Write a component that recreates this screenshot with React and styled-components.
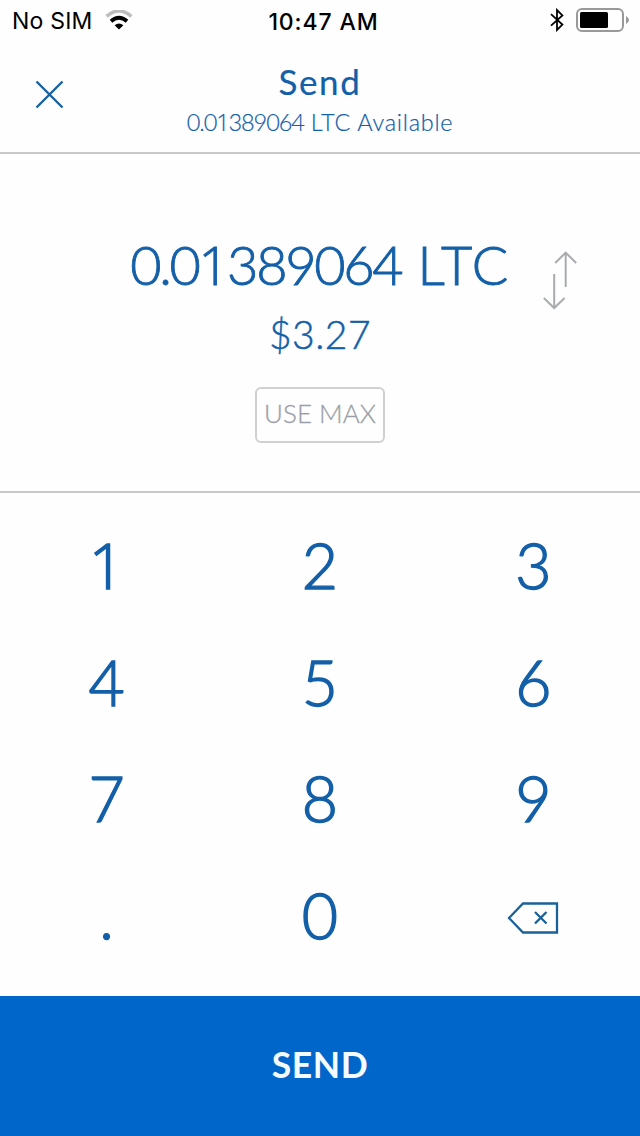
import React from 'react';
import styled, { createGlobalStyle } from 'styled-components';

const GlobalStyle = createGlobalStyle`
  * { box-sizing: border-box; }
  body { margin: 0; background: #fefefe; }
  button { border: 0; padding: 0; margin: 0; background: none; font: inherit; color: inherit; cursor: pointer; }
  svg { display: block; }
`;

const Screen = styled.main`
  display: flex;
  flex-direction: column;
  width: 640px;
  height: 1136px;
  overflow: hidden;
  background: #fefefe;
  color: #135fa8;
  font-family: Lato, "Open Sans", sans-serif;
`;

const StatusBar = styled.div`
  display: grid;
  grid-template-columns: 1fr auto 1fr;
  align-items: center;
  height: 40px;
  padding: 0 11px 0 12px;
  color: #000;
  font-family: Inter, sans-serif;
  font-size: 23px;
  line-height: 40px;

  svg { margin-bottom: 2px; }
`;

const Carrier = styled.div`
  display: flex;
  align-items: center;
  gap: 12px;
  letter-spacing: 0.2px;
`;

const Clock = styled.div`
  padding: 2px 0 0 6px;
  font-weight: 500;
  letter-spacing: 0.9px;
`;

const Indicators = styled.div`
  display: flex;
  align-items: center;
  justify-content: flex-end;
  gap: 12px;
`;

const Header = styled.header`
  display: grid;
  grid-template-columns: 100px 1fr 100px;
  height: 114px;
  border-bottom: 2px solid #c8c8c8;
`;

const CloseButton = styled.button`
  display: flex;
  align-items: flex-start;
  padding: 40px 0 0 35px;
`;

const Heading = styled.div`
  display: flex;
  flex-direction: column;
  align-items: center;
  padding-top: 19px;
`;

const Title = styled.h1`
  margin: 0;
  font-size: 35px;
  font-weight: 400;
  line-height: 44px;
  letter-spacing: 1.6px;
  -webkit-text-stroke: 0.2px;
`;

const Spaced = styled.span`
  letter-spacing: ${(p) => p.$gap}px;
`;

const Available = styled.div`
  margin-top: 1px;
  font-size: 23.5px;
  font-weight: 300;
  line-height: 36px;
  white-space: nowrap;
  -webkit-text-stroke: 0.2px;
`;

const AmountPanel = styled.section`
  display: grid;
  grid-template-columns: 120px 1fr 120px;
  height: 339px;
  border-bottom: 2px solid #c8c8c8;
`;

const Amounts = styled.div`
  grid-column: 2;
  display: flex;
  flex-direction: column;
  align-items: center;
  padding-top: 75px;
`;

const CryptoAmount = styled.div`
  font-size: 54px;
  font-weight: 300;
  line-height: 72px;
  white-space: nowrap;
  -webkit-text-stroke: 0.9px;
`;

const FiatAmount = styled.div`
  padding-top: 3px;
  font-size: 39px;
  font-weight: 300;
  line-height: 60px;
  letter-spacing: 0.5px;
  -webkit-text-stroke: 0.5px;
`;

const MaxButton = styled.button`
  width: 130px;
  height: 56px;
  margin-top: 23px;
  border: 2px solid #d0d0d0;
  border-radius: 6px;
  color: #9b9ea6;
  font-size: 26px;
  font-weight: 300;
  line-height: 48px;
  padding-bottom: 4px;
  white-space: nowrap;
  -webkit-text-stroke: 0.3px;
`;

const SwapButton = styled.button`
  display: flex;
  align-items: flex-start;
  padding: 96px 0 0 22px;
`;

const Keypad = styled.section`
  display: grid;
  grid-template-columns: repeat(3, 1fr);
  grid-auto-rows: 116.5px;
  flex: 1;
  padding-top: 14px;
`;

const Key = styled.button`
  display: flex;
  align-items: center;
  justify-content: center;
  font-size: 62.5px;
  font-weight: 300;
  line-height: 1;
  -webkit-text-stroke: 1.4px;
`;

const DeleteKey = styled(Key)`
  padding-top: 7px;
`;

const PlainOne = styled.span`
  font-family: "Open Sans", sans-serif;
  line-height: 1;
`;

const SendButton = styled.button`
  height: 140px;
  padding-bottom: 2px;
  background: #0066c9;
  color: #f4fcff;
  font-size: 35.5px;
  font-weight: 700;
  line-height: 134px;
  letter-spacing: 0.6px;
`;

const WifiIcon = () => (
  <svg width="28" height="20" viewBox="0 0 28 20" fill="none">
    <path d="M1.6 6.3Q14-4.3 26.4 6.3" stroke="#bdbdbd" strokeWidth="3.6" />
    <path d="M6 11.2Q14 4.4 22 11.2" stroke="#000" strokeWidth="3.8" />
    <path d="M9.6 15.2Q14 11.6 18.4 15.2L14 19.6Z" fill="#000" />
  </svg>
);

const BluetoothIcon = () => (
  <svg width="14" height="24" viewBox="0 0 14 24" fill="none" stroke="#000" strokeWidth="1.8">
    <path d="M1 6.2 12.4 16.6 7 22V2L12.4 7.4 1 17.6" />
  </svg>
);

const BatteryIcon = () => (
  <svg width="53" height="24" viewBox="0 0 53 24">
    <rect x="1" y="1" width="46" height="22" rx="5" fill="none" stroke="#999" strokeWidth="2" />
    <rect x="4" y="4" width="28" height="16" rx="1.5" fill="#000" />
    <path d="M50 8Q53 10 53 12T50 16Z" fill="#999" />
  </svg>
);

const CloseIcon = () => (
  <svg width="29" height="29" viewBox="0 0 29 29" stroke="#17629f" strokeWidth="2.4">
    <path d="M1.5 1.5 27.5 27.5M27.5 1.5 1.5 27.5" />
  </svg>
);

const SwapIcon = () => (
  <svg width="36" height="60" viewBox="0 0 36 60" fill="none" stroke="#a9abae" strokeWidth="2">
    <path d="M23.7 37V3M13.2 13 23.7 2.6 34.2 13M12.2 24V57M1.8 48 12.2 58 22.6 48" />
  </svg>
);

const BackspaceIcon = () => (
  <svg width="52" height="32" viewBox="0 0 52 32" fill="none" stroke="#1a6198" strokeWidth="2.3">
    <path d="M16 1.5H50V30.5H16L2 16ZM28 10 39.5 21.5M39.5 10 28 21.5" />
  </svg>
);

// Sets the digit 1 in a face whose 1 has no foot.
const Figures = ({ children }) =>
  children.split(/(1)/).map((part, i) => (part === '1' ? <PlainOne key={i}>1</PlainOne> : part));

const keys = ['1', '2', '3', '4', '5', '6', '7', '8', '9', '.', '0'];

export default function App() {
  return (
    <>
      <GlobalStyle />
      <Screen>
        <StatusBar>
          <Carrier>No SIM<WifiIcon /></Carrier>
          <Clock>10:47 AM</Clock>
          <Indicators><BluetoothIcon /><BatteryIcon /></Indicators>
        </StatusBar>
        <Header>
          <CloseButton aria-label="Close"><CloseIcon /></CloseButton>
          <Heading>
            <Title>Send</Title>
            <Available>
              <Spaced $gap={-1.1}><Figures>0.01389064</Figures></Spaced>
              <Spaced $gap={0.7}> LTC Available</Spaced>
            </Available>
          </Heading>
        </Header>
        <AmountPanel>
          <Amounts>
            <CryptoAmount>
              <Spaced $gap={-2.3}><Figures>0.01389064</Figures></Spaced>
              <Spaced $gap={1.6}> LTC</Spaced>
            </CryptoAmount>
            <FiatAmount>$3.27</FiatAmount>
            <MaxButton>USE MAX</MaxButton>
          </Amounts>
          <SwapButton aria-label="Swap currency"><SwapIcon /></SwapButton>
        </AmountPanel>
        <Keypad>
          {keys.map((k) => <Key key={k}><Figures>{k}</Figures></Key>)}
          <DeleteKey aria-label="Delete"><BackspaceIcon /></DeleteKey>
        </Keypad>
        <SendButton>SEND</SendButton>
      </Screen>
    </>
  );
}
